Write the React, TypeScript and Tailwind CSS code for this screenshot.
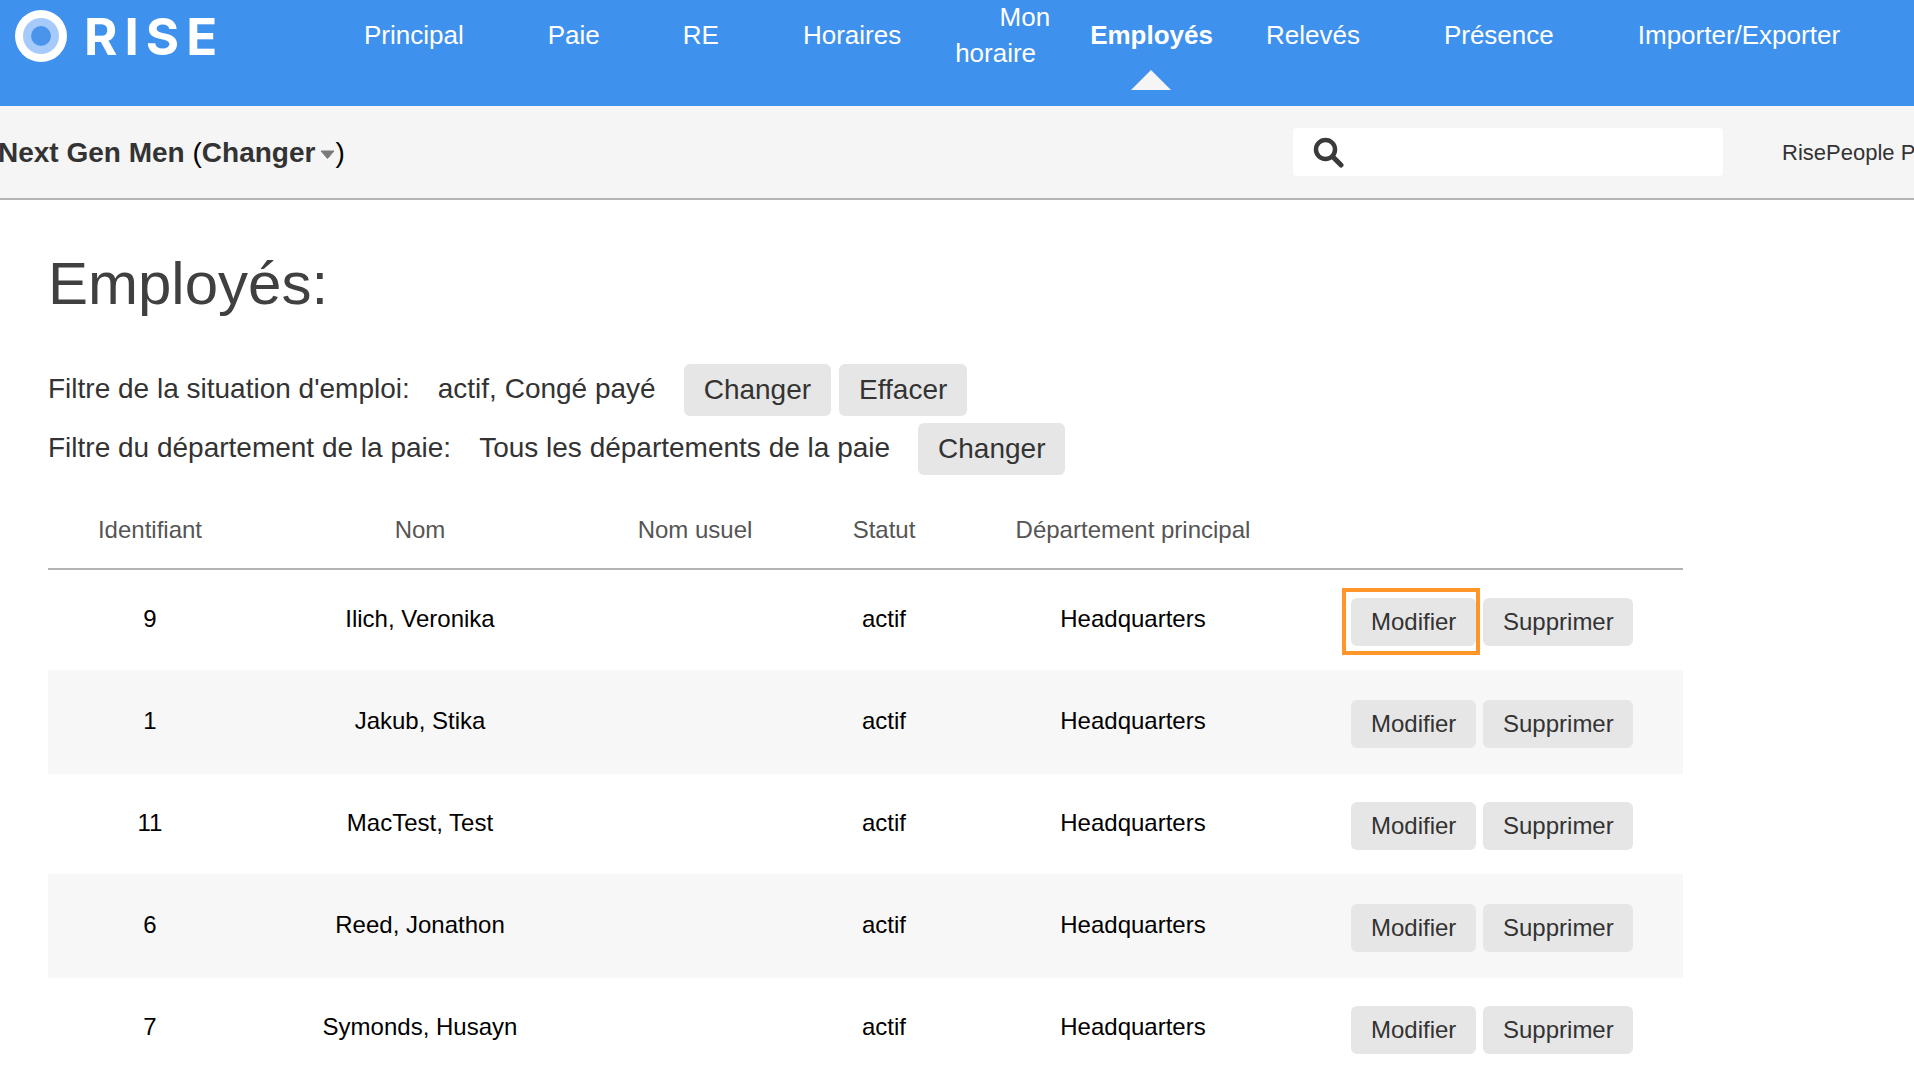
import React from "react";

const FONT = "font-['Liberation_Sans',Arial,sans-serif]";

function Btn({ children, small, wide, focus }: { children: React.ReactNode; small?: boolean; wide?: boolean; focus?: boolean }) {
  return (
    <button
      type="button"
      className={
        wide
          ? "relative h-12 w-[150px] rounded-md bg-[#e6e6e6] text-[24px] leading-none text-[#333333]"
          : small
          ? "relative h-12 rounded-md bg-[#e6e6e6] px-5 text-[24px] leading-none text-[#333333]"
          : "h-[52px] rounded-md bg-[#e6e6e6] px-5 text-[28px] leading-none text-[#333333]"
      }
    >
      {children}
      {focus && <span className="absolute -top-[10px] -left-[9px] -right-[4px] -bottom-[9px] border-4 border-[#ff9627]" />}
    </button>
  );
}

const rows = [
  { id: "9", name: "Ilich, Veronika", bg: "h-[101px] bg-white", focus: true },
  { id: "1", name: "Jakub, Stika", bg: "h-[104px] bg-[#f7f7f7]" },
  { id: "11", name: "MacTest, Test", bg: "h-[100px] bg-white" },
  { id: "6", name: "Reed, Jonathon", bg: "h-[104px] bg-[#f7f7f7]" },
  { id: "7", name: "Symonds, Husayn", bg: "h-[100px] bg-white" },
];

export default function App() {
  return (
    <div className={`${FONT} h-[1072px] w-full overflow-hidden bg-white`}>
      <header className="flex h-[106px] bg-[#3f91ee] text-white">
        <div className="mt-[10px] ml-[15px] flex h-[52px] w-[349px] shrink-0 items-center">
          <svg width="52" height="52" viewBox="0 0 52 52">
            <circle cx="26" cy="26" r="26" fill="#ffffff" />
            <circle cx="26" cy="26" r="18" fill="#a6cbfa" />
            <circle cx="26" cy="26" r="10" fill="#4a94ec" />
          </svg>
          <span className="ml-[17px] font-['Inter',sans-serif] text-[51px] leading-none font-bold tracking-[7px]">RISE</span>
        </div>
        <nav className="flex items-start whitespace-nowrap text-[26px] leading-[36px]">
          <a className="mt-[17px]">Principal</a>
          <a className="mt-[17px] ml-[84px]">Paie</a>
          <a className="mt-[17px] ml-[83px]">RE</a>
          <a className="mt-[17px] ml-[84px]">Horaires</a>
          <a className="-mt-px ml-[54px] flex w-[95px] flex-col">
            <span className="self-end">Mon</span>
            <span>horaire</span>
          </a>
          <a className="relative mt-[17px] ml-[40px] font-bold">
            Employés
            <svg className="absolute top-[53px] left-[41px]" width="40" height="20" viewBox="0 0 40 20">
              <polygon points="20,0 40,20 0,20" fill="#f5f5f5" />
            </svg>
          </a>
          <a className="mt-[17px] ml-[53px]">Relevés</a>
          <a className="mt-[17px] ml-[84px]">Présence</a>
          <a className="mt-[17px] ml-[84px]">Importer/Exporter</a>
        </nav>
      </header>

      <div className="flex h-[94px] items-center border-b-2 border-[#b3b3b3] bg-[#f5f5f5]">
        <div className="-ml-[2px] flex w-[1295px] shrink-0 items-center pt-px text-[28px] text-[#333333]">
          <span className="font-bold">
            Next Gen Men <span className="font-normal text-black">(</span>Changer
          </span>
          <svg className="mt-1 ml-[5px]" width="15" height="9" viewBox="0 0 15 9">
            <path d="M1 1h13L7.5 8.5z" fill="#7a7a7a" stroke="#7a7a7a" strokeLinejoin="round" />
          </svg>
          <span className="text-black">)</span>
        </div>
        <div className="flex h-12 w-[430px] shrink-0 items-center rounded bg-white pl-[20px]">
          <svg width="31" height="31" viewBox="0 0 31 31" fill="none">
            <circle cx="12.5" cy="12.5" r="9.5" stroke="#3a3a3a" strokeWidth="4.5" />
            <path d="M19.5 19.5L28 28" stroke="#3a3a3a" strokeWidth="5" strokeLinecap="round" />
          </svg>
        </div>
        <div className="ml-[59px] shrink-0 whitespace-nowrap text-[22px] text-[#333333]">RisePeople Paie</div>
      </div>

      <main className="px-12">
        <h1 className="mt-[49px] text-[60px] leading-[70px] text-[#404040]">Employés:</h1>

        <div className="mt-[45px] flex items-center text-[28px] text-[#333333]">
          <span className="-mt-[2px]">Filtre de la situation d'emploi:</span>
          <span className="-mt-[2px] mx-7">actif, Congé payé</span>
          <div className="flex gap-2">
            <Btn>Changer</Btn>
            <Btn>Effacer</Btn>
          </div>
        </div>
        <div className="mt-[7px] flex items-center text-[28px] text-[#333333]">
          <span className="-mt-[2px]">Filtre du département de la paie:</span>
          <span className="-mt-[2px] mx-7">Tous les départements de la paie</span>
          <Btn>Changer</Btn>
        </div>

        <table className="mt-[15px] w-[1635px] table-fixed border-collapse text-center text-[24px]">
          <colgroup>
            <col className="w-[204px]" />
            <col className="w-[336px]" />
            <col className="w-[214px]" />
            <col className="w-[164px]" />
            <col className="w-[334px]" />
            <col />
          </colgroup>
          <thead>
            <tr className="h-[79px] border-b-2 border-[#b3b3b3] text-[#555555]">
              <th className="pt-px font-normal">Identifiant</th>
              <th className="pt-px font-normal">Nom</th>
              <th className="pt-px font-normal">Nom usuel</th>
              <th className="pt-px font-normal">Statut</th>
              <th className="pt-px font-normal">Département principal</th>
              <th />
            </tr>
          </thead>
          <tbody className="text-black">
            {rows.map((r) => (
              <tr key={r.id} className={r.bg}>
                <td className="pb-[2px]">{r.id}</td>
                <td className="pb-[2px]">{r.name}</td>
                <td />
                <td className="pb-[2px]">actif</td>
                <td className="pb-[2px]">Headquarters</td>
                <td className="pt-[4px] pl-[51px]">
                  <div className="flex gap-[7px]">
                    <Btn small focus={r.focus}>Modifier</Btn>
                    <Btn wide>Supprimer</Btn>
                  </div>
                </td>
              </tr>
            ))}
          </tbody>
        </table>
      </main>
    </div>
  );
}
